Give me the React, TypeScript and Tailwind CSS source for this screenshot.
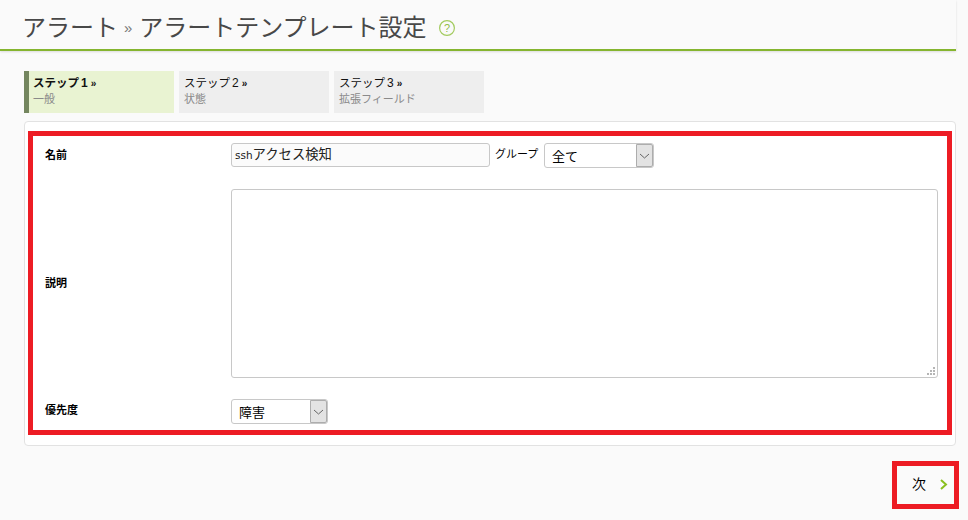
const FONT = "font-['Liberation_Sans','Noto_Sans_CJK_JP',sans-serif]";

function Step({ title, num, sub, active, w }: { title: string; num: string; sub: string; active?: boolean; w: string }) {
  return (
    <div
      className={`${w} h-[42px] pt-[5px] leading-[16px] ${
        active ? "bg-[#e9f3d2] border-l-[5px] border-[#74865f] pl-[4px]" : "bg-[#eeeeee] pl-[5px]"
      }`}
    >
      <div className={`h-[15px] text-[11.5px] leading-[15px] text-[#111] whitespace-nowrap ${active ? "font-bold" : ""}`}>
        {title}
        <span className="text-[12px] ml-[2px]">{num}</span>
        <span className="text-[10px] font-bold ml-[3px]">»</span>
      </div>
      <div className="text-[11px] text-[#8a8a8a]">{sub}</div>
    </div>
  );
}

function Select({ label, w }: { label: string; w: string }) {
  return (
    <div className={`${w} h-[25px] flex border border-[#c8c8c8] rounded-[3px] bg-white`}>
      <div className="flex-1 pl-[7px] text-[13px] leading-[26px] text-black">{label}</div>
      <div className="w-[17px] bg-[#e3e3e3] border border-[#adadad] rounded-r-[2px] flex items-center justify-center">
        <svg width="11" height="6" viewBox="0 0 11 6" fill="none" stroke="#666" strokeWidth="1">
          <path d="M1 1l4.5 4L10 1" />
        </svg>
      </div>
    </div>
  );
}

function ResizeDots() {
  return (
    <svg className="absolute right-[3px] bottom-[3px]" width="8" height="8" viewBox="0 0 8 8" fill="#b5b5b5">
      <rect x="6" y="0" width="2" height="2" />
      <rect x="3" y="3" width="2" height="2" />
      <rect x="6" y="3" width="2" height="2" />
      <rect x="0" y="6" width="2" height="2" />
      <rect x="3" y="6" width="2" height="2" />
      <rect x="6" y="6" width="2" height="2" />
    </svg>
  );
}

export default function App() {
  return (
    <div className={`${FONT} w-[968px] h-[520px] bg-[#fafafa] overflow-hidden relative`}>
      <div className="w-[956px] h-[51px] bg-[#fafafa] border-b-2 border-[#85b52f] shadow-[0_1px_2px_rgba(0,0,0,0.12)] pl-[22px] pt-[6px] flex items-center">
        <h1 className="flex items-center text-[24px] font-normal text-[#484848] leading-[44px] whitespace-nowrap">
          <span>アラート</span>
          <span className="text-[15px] text-[#777] ml-[6px] mr-[7px]">»</span>
          <span>アラートテンプレート設定</span>
        </h1>
        <svg className="ml-[12px]" width="16" height="16" viewBox="0 0 16 16" fill="none">
          <circle cx="8" cy="8" r="7.4" stroke="#a3cb5f" strokeWidth="1.2" />
          <text x="8" y="12" textAnchor="middle" fontSize="11" fill="#8fbc45">?</text>
        </svg>
      </div>

      <div className="pl-[24px] pt-[20px] w-[956px]">
        <div className="flex gap-[5px]">
          <Step title="ステップ" num="1" sub="一般" active w="w-[150px]" />
          <Step title="ステップ" num="2" sub="状態" w="w-[150px]" />
          <Step title="ステップ" num="3" sub="拡張フィールド" w="w-[150px]" />
        </div>

        <div className="mt-[8px] h-[325px] bg-white border border-[#e2e2e2] rounded-[4px] pt-[21px] pl-[20px] pr-[17px]">
          <div className="flex h-[25px]">
            <div className="w-[186px] text-[11px] font-bold text-black leading-[24px]">名前</div>
            <div className="w-[259px] h-[24px] bg-[#fbfbfb] border border-[#c8c8c8] rounded-[3px] pl-[3px] text-[13.33px] leading-[22px] text-[#222] whitespace-nowrap">
              <span className="font-['DejaVu_Sans',sans-serif] text-[10.5px]">ssh</span>アクセス検知
            </div>
            <div className="ml-[5px] w-[49px] text-[11px] text-black leading-[23px]">グループ</div>
            <Select label="全て" w="w-[110px]" />
          </div>
          <div className="flex items-center mt-[21px]">
            <div className="w-[186px] text-[11px] font-bold text-black">説明</div>
            <div className="relative w-[707px] h-[189px]">
              <textarea
                readOnly
                className="block w-full h-full bg-white border border-[#c8c8c8] rounded-[3px] outline-none resize-none"
              />
              <ResizeDots />
            </div>
          </div>
          <div className="flex mt-[21px]">
            <div className="w-[186px] text-[11px] font-bold text-black leading-[22px]">優先度</div>
            <Select label="障害" w="w-[97px]" />
          </div>
        </div>
      </div>

      <div className="absolute left-[912px] top-[476px] flex items-center text-[14px] text-black leading-[17px]">
        次
        <svg className="ml-[14px]" width="8" height="11" viewBox="0 0 8 11" fill="none" stroke="#8abf1f" strokeWidth="2">
          <path d="M1 1l5 4.5L1 10" />
        </svg>
      </div>

      {/* red annotation frames that lie over the page */}
      <div className="absolute left-[28px] top-[131px] w-[924px] h-[304px] border-[5px] border-[#ed1c24]" />
      <div className="absolute left-[892px] top-[461px] w-[67px] h-[48px] border-[5px] border-[#ed1c24]" />
    </div>
  );
}
